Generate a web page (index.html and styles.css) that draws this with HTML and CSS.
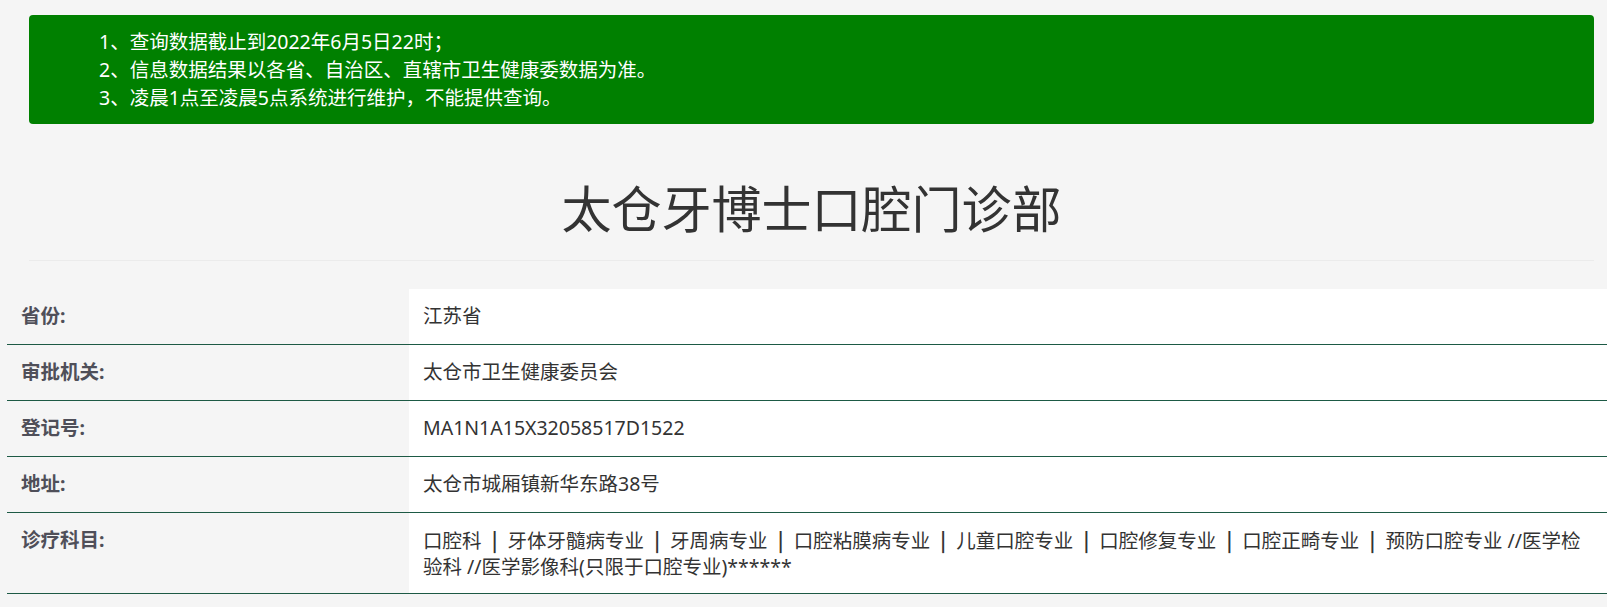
FILE: index.html
```html
<!DOCTYPE html>
<html lang="zh-CN">
<head>
<meta charset="utf-8">
<title>太仓牙博士口腔门诊部</title>
<link rel="stylesheet" href="styles.css">
</head>
<body>
<div class="wrap">
  <div class="notice">
    <p>1、查询数据截止到2022年6月5日22时；</p>
    <p>2、信息数据结果以各省、自治区、直辖市卫生健康委数据为准。</p>
    <p>3、凌晨1点至凌晨5点系统进行维护，不能提供查询。</p>
  </div>
  <h1 class="title">太仓牙博士口腔门诊部</h1>
  <div class="sep"></div>
</div>
<table class="info">
  <tr><th>省份:</th><td>江苏省</td></tr>
  <tr><th>审批机关:</th><td>太仓市卫生健康委员会</td></tr>
  <tr><th>登记号:</th><td>MA1N1A15X32058517D1522</td></tr>
  <tr><th>地址:</th><td>太仓市城厢镇新华东路38号</td></tr>
  <tr class="multi"><th>诊疗科目:</th><td>口腔科 &nbsp;<b class="bar">|</b>&nbsp; 牙体牙髓病专业 &nbsp;<b class="bar">|</b>&nbsp; 牙周病专业 &nbsp;<b class="bar">|</b>&nbsp; 口腔粘膜病专业 &nbsp;<b class="bar">|</b>&nbsp; 儿童口腔专业 &nbsp;<b class="bar">|</b>&nbsp; 口腔修复专业 &nbsp;<b class="bar">|</b>&nbsp; 口腔正畸专业 &nbsp;<b class="bar">|</b>&nbsp; 预防口腔专业 //医学检验科 //医学影像科(只限于口腔专业)******</td></tr>
</table>
</body>
</html>
```
FILE: styles.css
```css
html, body {
  margin: 0;
  padding: 0;
  background: #f5f5f5;
  overflow: hidden;
}
body {
  font-family: "Noto Sans", "Noto Sans CJK SC", sans-serif;
  color: #333;
  width: 1607px;
}
.wrap {
  margin: 0 13px 0 29px;
  padding-top: 15px;
}
.notice {
  background: #008000;
  color: #fff;
  border-radius: 4px;
  padding: 13px 20px 12px 70px;
  font-size: 19.5px;
  line-height: 28px;
}
.notice p {
  margin: 0;
}
.title {
  margin: 52px 0 24px;
  text-align: center;
  font-family: "Noto Sans CJK SC", sans-serif;
  font-size: 50px;
  line-height: 60px;
  font-weight: 400;
  color: #333;
}
.sep {
  height: 1px;
  background: #ebebeb;
}
.info {
  margin: 28px 0 0 7px;
  width: 1600px;
  border-collapse: collapse;
  font-size: 19.5px;
  line-height: 26px;
}
.info tr {
  border-bottom: 1px solid #1d5a45;
}
.info th {
  width: 374px;
  text-align: left;
  vertical-align: top;
  font-weight: 700;
  color: #4f4f59;
  padding: 14px 14px 15px;
}
.info td {
  background: #fff;
  vertical-align: top;
  padding: 14px 10px 15px 14px;
  color: #333;
}
.info .multi th,
.info .multi td {
  padding-bottom: 13px;
}
.bar {
  font-family: "Noto Sans CJK SC", sans-serif;
  font-weight: 700;
  color: #333;
}
```
